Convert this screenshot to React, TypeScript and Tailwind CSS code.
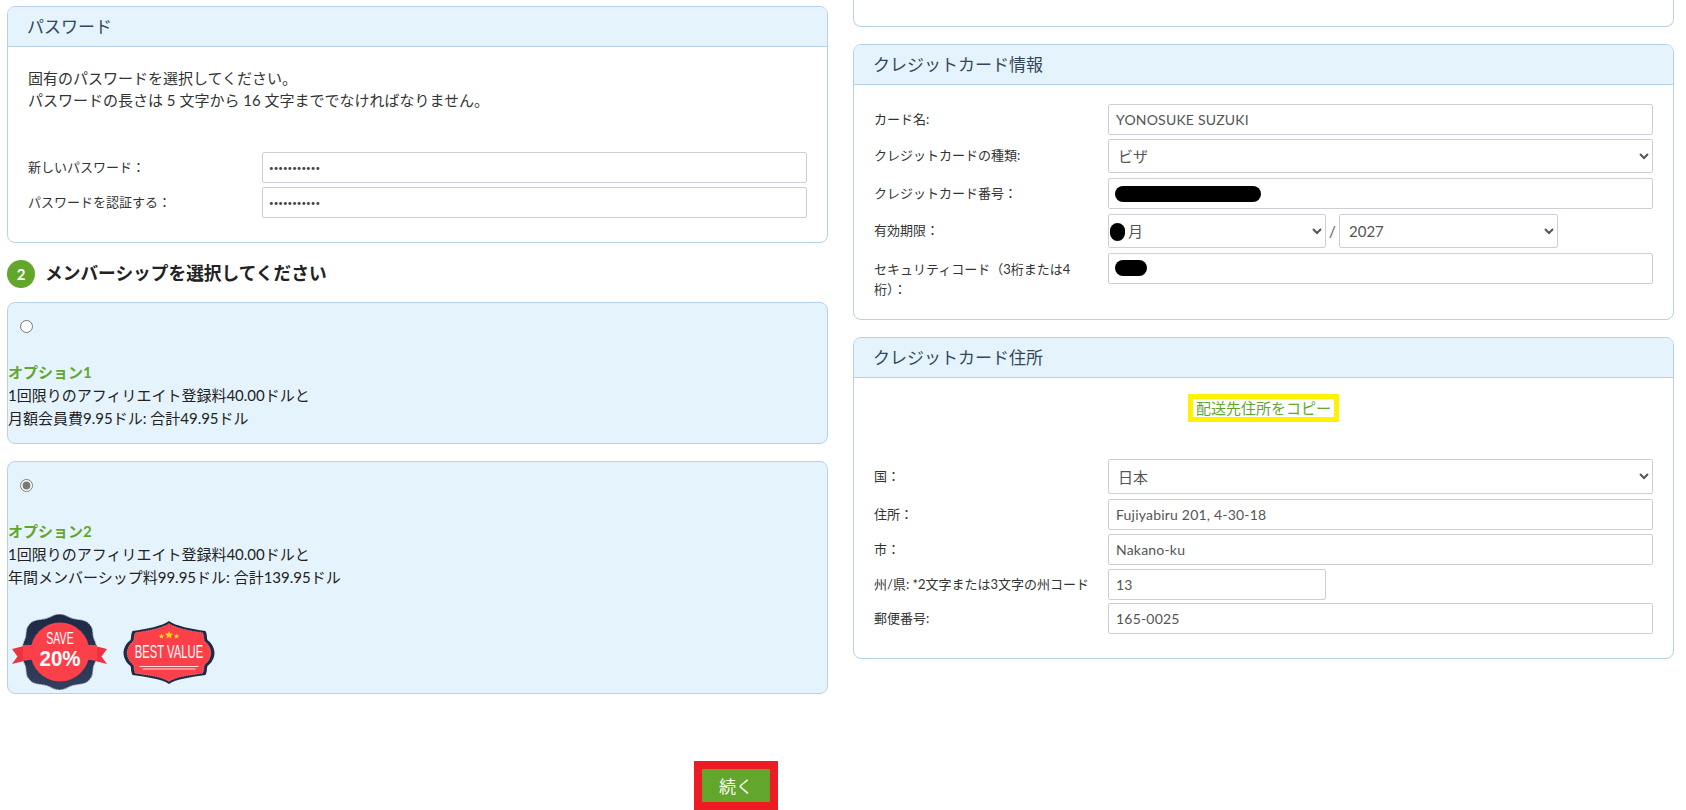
import React from "react";

const FONT = "[font-family:'Lato','Noto_Sans_CJK_JP',sans-serif]";
const BADGE_FONT = "'Liberation Sans',sans-serif";

function Panel({ title, children }: { title: string; children: React.ReactNode }) {
  return (
    <section className="rounded-[8px] border border-[#b7d2e8] bg-white overflow-hidden">
      <header className="h-[40px] bg-[#e5f3fd] border-b border-[#b7d2e8] pl-[19px] flex items-center text-[17px] text-[#33475b]">
        {title}
      </header>
      {children}
    </section>
  );
}

function Row({ label, children, top }: { label: React.ReactNode; children: React.ReactNode; top?: boolean }) {
  return (
    <div className={`flex ${top ? "items-start" : "items-center"}`}>
      <label className={`w-[234px] shrink-0 text-[13px] text-[#333] ${top ? "leading-[20px] pt-[6px]" : ""}`}>{label}</label>
      <div className="flex-1 min-w-0">{children}</div>
    </div>
  );
}

const inputCls = "block w-full h-[31px] border border-[#ccd0d6] rounded-[2px] px-[7px] text-[14px] tracking-[0.2px] text-[#555] bg-white outline-none";
const passCls = "block w-full h-[31px] border border-[#ccd0d6] rounded-[2px] px-[6px] text-[8px] text-[#444] bg-white outline-none";
const selectCls = "block w-full h-[34px] border border-[#ccd0d6] rounded-[2px] pl-[5px] text-[15px] text-[#555] bg-white outline-none";

function SaveBadge() {
  return (
    <svg width="97" height="76" viewBox="0 0 97 76" className="shrink-0">
      <defs>
        <linearGradient id="navy" x1="0" y1="0" x2="0" y2="1">
          <stop offset="0" stopColor="#1d2845" />
          <stop offset="1" stopColor="#333f5c" />
        </linearGradient>
      </defs>
      <path d="M48.500 0C54 0 58 4 64 5C70 6 76 6 79 11C83 15 81 20 83 25C85 29 86 33 86 38C86 43 85 47 83 51C81 56 83 61 79 65C76 70 70 70 64 71C58 72 54 76 48.500 76C43 76 39 72 33 71C27 70 21 70 18 65C14 61 16 56 14 51C12 47 11 43 11 38C11 33 12 29 14 25C16 20 14 15 18 11C21 6 27 6 33 5C39 4 43 0 48.500 0Z" fill="url(#navy)" stroke="#aeb6c4" strokeWidth="1" strokeDasharray="2 1" />
      <circle cx="49" cy="38" r="29.500" fill="#fb4049" />
      <path d="M1 35L17 31V46L1 50L6.500 42.500Z" fill="#ee3340" />
      <path d="M96 35L80 31V46L96 50L90.500 42.500Z" fill="#ee3340" />
      <path d="M12 31H86V46H12Z" fill="#fb4049" />
      <text transform="translate(49 30) scale(0.62 1)" textAnchor="middle" fontSize="17" fill="#fff" fontFamily={BADGE_FONT}>SAVE</text>
      <text transform="translate(49 52) scale(0.93 1)" textAnchor="middle" fontSize="22" fontWeight="700" fill="#fff" fontFamily={BADGE_FONT}>20%</text>
    </svg>
  );
}

const BEST_PATH = "M45.500 0C52 5 68 8 82 10C84 14 83 16 84 19C88 22 91 27 91 32C91 37 88 42 84 45C83 48 84 50 82 54C68 56 52 58 45.500 63C39 58 23 56 9 54C7 50 8 48 7 45C3 42 0 37 0 32C0 27 3 22 7 19C8 16 7 14 9 10C23 8 39 5 45.500 0Z";

function BestBadge() {
  return (
    <svg width="92" height="63" viewBox="0 0 91 63" className="shrink-0">
      <path d={BEST_PATH} fill="#1f2a44" />
      <path d={BEST_PATH} fill="#fb4049" transform="translate(3.600 2.500) scale(0.92)" stroke="#ffb3b7" strokeWidth="0.500" strokeDasharray="1.500 1" />
      <g fill="#ffd21f">
        <path d="M45.500 10l1.200 2.500 2.800.3-2 1.900.5 2.800-2.500-1.400-2.500 1.400.5-2.800-2-1.900 2.800-.3z" />
        <path d="M38 12.500l.8 1.700 1.900.2-1.400 1.300.4 1.900-1.700-1-1.700 1 .4-1.900-1.400-1.300 1.900-.2z" />
        <path d="M53 12.500l.8 1.700 1.900.2-1.400 1.300.4 1.900-1.700-1-1.700 1 .4-1.900-1.400-1.300 1.900-.2z" />
      </g>
      <text transform="translate(45.500 37) scale(0.625 1)" textAnchor="middle" fontSize="18" fill="#fff" fontFamily={BADGE_FONT}>BEST VALUE</text>
      <path d="M16 45.500H75M19 48H72" stroke="#ffd9db" strokeWidth="1" />
    </svg>
  );
}

function Option({ name, checked, l1, l2, children }: { name: string; checked?: boolean; l1: string; l2: string; children?: React.ReactNode }) {
  return (
    <div className="rounded-[8px] border border-[#b7d2e8] bg-[#e5f3fd] pt-[17px]">
      <input type="radio" name="plan" defaultChecked={checked} className="block ml-[12px] m-0 size-[13px] accent-[#7a7a7a]" />
      <div className="mt-[28px] text-[15px] font-bold leading-[23px] text-[#63a62c]">{name}</div>
      <div className="text-[15px] leading-[22.500px] text-[#222]">{l1}</div>
      <div className="text-[15px] leading-[22.500px] text-[#222]">{l2}</div>
      {children}
    </div>
  );
}

export default function App() {
  return (
    <div className={`h-[810px] w-[1686px] overflow-hidden bg-white ${FONT}`}>
      <div className="flex gap-[25px] pl-[7px] pr-[12px] h-[761px]">
        <div className="w-[821px] shrink-0 pt-[6px]">
          <Panel title="パスワード">
            <div className="pl-[20px] pr-[20px] pt-[20px] pb-[24px]">
              <p className="text-[15px] leading-[22px] text-[#333]">
                固有のパスワードを選択してください。
                <br />
                パスワードの長さは 5 文字から 16 文字まででなければなりません。
              </p>
              <div className="mt-[41px] flex flex-col gap-[4px]">
                <Row label="新しいパスワード："><input type="password" defaultValue="xxxxxxxxxxx" className={passCls} /></Row>
                <Row label="パスワードを認証する："><input type="password" defaultValue="xxxxxxxxxxx" className={passCls} /></Row>
              </div>
            </div>
          </Panel>

          <div className="mt-[17px] flex items-center gap-[10px]">
            <span className="size-[28px] rounded-full bg-[#63a62c] text-white font-bold text-[15px] flex items-center justify-center">2</span>
            <h2 className="text-[17.700px] font-bold text-[#222]">メンバーシップを選択してください</h2>
          </div>

          <div className="mt-[14px] flex flex-col gap-[18px]">
            <div className="h-[141px]">
              <Option name="オプション1" l1="1回限りのアフィリエイト登録料40.00ドルと" l2="月額会員費9.95ドル: 合計49.95ドル">
                <div className="h-[14px]" />
              </Option>
            </div>
            <Option name="オプション2" checked l1="1回限りのアフィリエイト登録料40.00ドルと" l2="年間メンバーシップ料99.95ドル: 合計139.95ドル">
              <div className="mt-[26px] pb-[3px] pl-[3px] flex items-center gap-[15px]">
                <SaveBadge />
                <BestBadge />
              </div>
            </Option>
          </div>
        </div>

        <div className="flex-1 min-w-0 flex flex-col gap-[17px]">
          <div className="h-[27px] shrink-0 rounded-b-[8px] border-x border-b border-[#b7d2e8]" />

          <Panel title="クレジットカード情報">
            <div className="pl-[20px] pr-[20px] pt-[19px] pb-[20px] flex flex-col">
              <Row label="カード名:"><input defaultValue="YONOSUKE SUZUKI" className={inputCls} /></Row>
              <div className="mt-[4px]"><Row label="クレジットカードの種類:"><select className={selectCls}><option>ビザ</option></select></Row></div>
              <div className="mt-[5px]">
                <Row label="クレジットカード番号：">
                  <div className="relative">
                    <input className={inputCls} />
                    <span className="absolute left-[7px] top-[8px] w-[146px] h-[16px] rounded-[8px] bg-black" />
                  </div>
                </Row>
              </div>
              <div className="mt-[5px]">
                <Row label="有効期限：">
                  <div className="flex items-center">
                    <div className="relative w-[218px]">
                      <select className={`${selectCls} pl-[15px]`}><option>月</option></select>
                      <span className="absolute left-[2px] top-[9px] w-[15px] h-[18px] rounded-full bg-black" />
                    </div>
                    <span className="w-[13px] text-center text-[15px] text-[#555]">/</span>
                    <div className="w-[219px]"><select className={selectCls}><option>2027</option></select></div>
                  </div>
                </Row>
              </div>
              <div className="mt-[5px]">
                <Row top label={<>セキュリティコード（3桁または4<br />桁）：</>}>
                  <div className="relative">
                    <input className={inputCls} />
                    <span className="absolute left-[7px] top-[7px] w-[32px] h-[16px] rounded-[8px] bg-black" />
                  </div>
                </Row>
              </div>
            </div>
          </Panel>

          <Panel title="クレジットカード住所">
            <div className="pl-[20px] pr-[20px] pt-[16px] pb-[24px]">
              <div className="flex justify-center">
                <button className="h-[28px] px-[3px] border-[5px] border-[#fff200] text-[15px] leading-[18px] text-[#63a62c]">配送先住所をコピー</button>
              </div>
              <div className="mt-[37px] flex flex-col">
                <Row label="国："><select className={`${selectCls} h-[35px]`}><option>日本</option></select></Row>
                <div className="mt-[5px]"><Row label="住所："><input defaultValue="Fujiyabiru 201, 4-30-18" className={inputCls} /></Row></div>
                <div className="mt-[4px]"><Row label="市："><input defaultValue="Nakano-ku" className={inputCls} /></Row></div>
                <div className="mt-[4px]"><Row label="州/県: *2文字または3文字の州コード"><div className="w-[218px]"><input defaultValue="13" className={inputCls} /></div></Row></div>
                <div className="mt-[3px]"><Row label="郵便番号:"><input defaultValue="165-0025" className={inputCls} /></Row></div>
              </div>
            </div>
          </Panel>
        </div>
      </div>

      <div className="pl-[694px]">
        <button className="w-[84px] h-[49px] border-[8px] border-[#ed1c24] bg-[#63a62c] text-white text-[17px] pt-[3px]">続く</button>
      </div>
    </div>
  );
}
